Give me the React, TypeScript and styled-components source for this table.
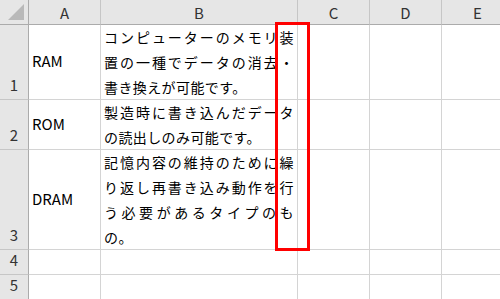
import styled, { createGlobalStyle } from 'styled-components';

const GlobalStyle = createGlobalStyle`
  html, body {
    margin: 0;
    padding: 0;
    background: #ffffff;
    overflow: hidden;
  }
  body {
    font-family: "Noto Sans CJK JP", "Noto Sans", sans-serif;
  }
`;

type Row = {
  no: number;
  height: number;
  label?: string;
  lines?: string[];
};

const rows: Row[] = [
  {
    no: 1,
    height: 75,
    label: 'RAM',
    lines: ['コンピューターのメモリ装', '置の一種でデータの消去・', '書き換えが可能です。'],
  },
  {
    no: 2,
    height: 50,
    label: 'ROM',
    lines: ['製造時に書き込んだデータ', 'の読出しのみ可能です。'],
  },
  {
    no: 3,
    height: 100,
    label: 'DRAM',
    lines: [
      '記憶内容の維持のために繰',
      'り返し再書き込み動作を行',
      'う必要があるタイプのも',
      'の。',
    ],
  },
  { no: 4, height: 25 },
  { no: 5, height: 25 },
];

const columns = ['A', 'B', 'C', 'D', 'E'];
const HEADER_HEIGHT = 25;

const App = () => {
  const rowTemplate = [HEADER_HEIGHT, ...rows.map((r) => r.height)].map((h) => `${h}px`).join(' ');

  return (
    <>
      <GlobalStyle />
      <Sheet>
        <Grid style={{ gridTemplateRows: rowTemplate }}>
          <Corner>
            <CornerMark />
          </Corner>
          {columns.map((c) => (
            <ColHeader key={c}>{c}</ColHeader>
          ))}

          {rows.map((r) => (
            <RowGroup key={r.no}>
              <RowHeader>{r.no}</RowHeader>
              <LabelCell>{r.label}</LabelCell>
              <TextCell>
                {r.lines?.map((line, i) => (
                  <Line key={i} $full={i < r.lines!.length - 1}>
                    {line}
                  </Line>
                ))}
              </TextCell>
              <Cell />
              <Cell />
              <Cell />
            </RowGroup>
          ))}
        </Grid>
        <Highlight />
      </Sheet>
    </>
  );
};

const Sheet = styled.div`
  position: relative;
  width: 500px;
  height: 299px;
  overflow: hidden;
  background: #ffffff;
`;

const Grid = styled.div`
  display: grid;
  grid-template-columns: 29px 72px 197px 72px 72px 72px;
  width: max-content;
`;

const HeaderBase = styled.div`
  box-sizing: border-box;
  background: #e6e6e6;
  color: #333333;
  font-family: "Noto Sans CJK JP", "Noto Sans", sans-serif;
  font-size: 15px;
  min-height: 0;
`;

const Corner = styled(HeaderBase)`
  position: relative;
  border-right: 1px solid #ababab;
  border-bottom: 1px solid #ababab;
`;

const CornerMark = styled.div`
  position: absolute;
  right: 4px;
  bottom: 4px;
  width: 0;
  height: 0;
  border-left: 16px solid transparent;
  border-bottom: 16px solid #b9b9b9;
`;

const ColHeader = styled(HeaderBase)`
  display: flex;
  align-items: center;
  justify-content: center;
  border-right: 1px solid #c6c6c6;
  border-bottom: 1px solid #ababab;
`;

const RowGroup = styled.div`
  display: contents;
`;

const RowHeader = styled(HeaderBase)`
  display: flex;
  align-items: flex-end;
  justify-content: center;
  padding-bottom: 5px;
  line-height: 18px;
  border-right: 1px solid #ababab;
  border-bottom: 1px solid #c6c6c6;
`;

const Cell = styled.div`
  box-sizing: border-box;
  min-height: 0;
  border-right: 1px solid #d4d4d4;
  border-bottom: 1px solid #d4d4d4;
  color: #000000;
`;

const LabelCell = styled(Cell)`
  display: flex;
  align-items: center;
  padding: 0 0 3px 3px;
  font-size: 15px;
`;

const TextCell = styled(Cell)`
  padding: 0 3px;
  font-size: 14px;
`;

const Line = styled.div<{ $full: boolean }>`
  height: 25px;
  line-height: 25px;
  letter-spacing: 0.4px;
  text-align: ${({ $full }) => ($full ? 'justify' : 'left')};
  text-align-last: ${({ $full }) => ($full ? 'justify' : 'left')};
  text-justify: inter-character;
`;

const Highlight = styled.div`
  position: absolute;
  left: 275px;
  top: 22px;
  width: 35px;
  height: 229px;
  box-sizing: border-box;
  border: 3px solid #ff0000;
  pointer-events: none;
`;

export default App;
